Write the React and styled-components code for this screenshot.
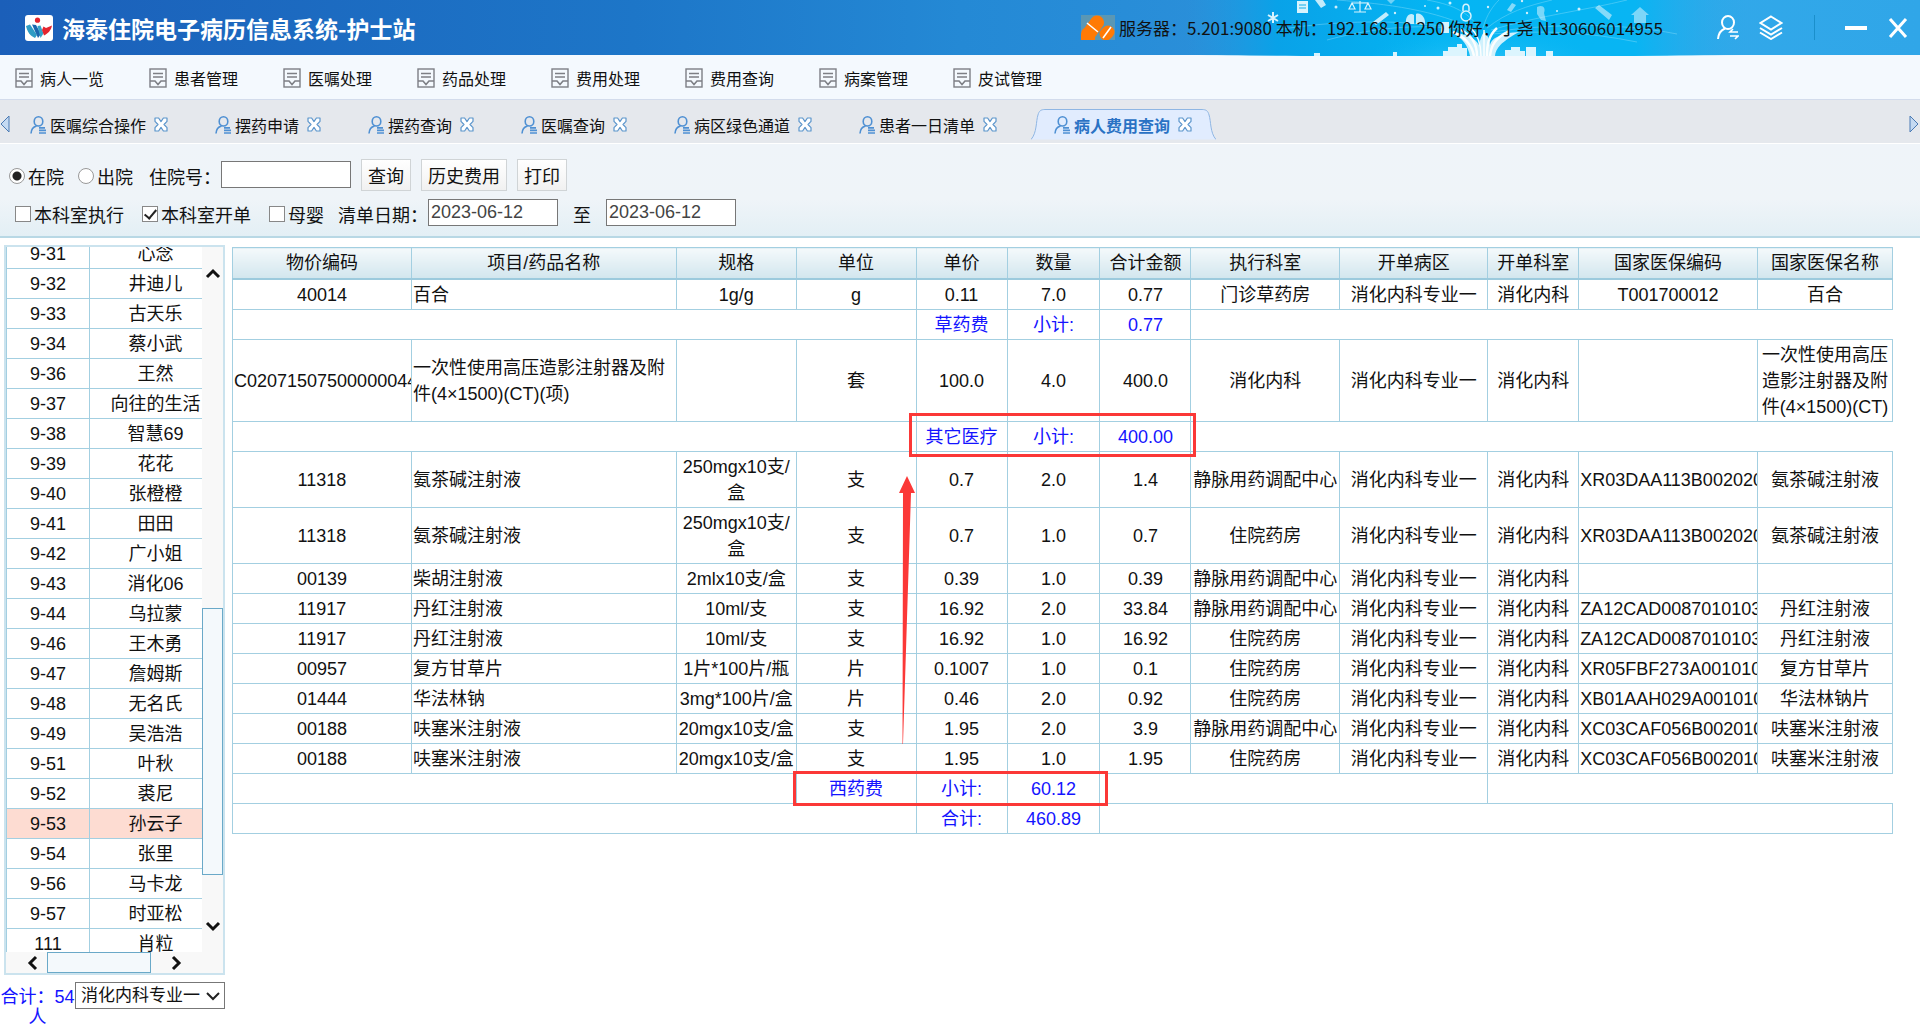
import React, { useLayoutEffect, useRef, useState } from 'react';
import styled, { createGlobalStyle, css } from 'styled-components';

const menus = [
	'病人一览',
	'患者管理',
	'医嘱处理',
	'药品处理',
	'费用处理',
	'费用查询',
	'病案管理',
	'皮试管理',
];

const tabs = [
	'医嘱综合操作',
	'摆药申请',
	'摆药查询',
	'医嘱查询',
	'病区绿色通道',
	'患者一日清单',
	'病人费用查询',
];

const patients = [
	['9-31', '心念'],
	['9-32', '井迪儿'],
	['9-33', '古天乐'],
	['9-34', '蔡小武'],
	['9-36', '王然'],
	['9-37', '向往的生活'],
	['9-38', '智慧69'],
	['9-39', '花花'],
	['9-40', '张橙橙'],
	['9-41', '田田'],
	['9-42', '广小姐'],
	['9-43', '消化06'],
	['9-44', '乌拉蒙'],
	['9-46', '王木勇'],
	['9-47', '詹姆斯'],
	['9-48', '无名氏'],
	['9-49', '吴浩浩'],
	['9-51', '叶秋'],
	['9-52', '裘尼'],
	['9-53', '孙云子'],
	['9-54', '张里'],
	['9-56', '马卡龙'],
	['9-57', '时亚松'],
	['111', '肖粒'],
];

const columns = [
	['物价编码', 179],
	['项目/药品名称', 265],
	['规格', 120],
	['单位', 120],
	['单价', 91],
	['数量', 93],
	['合计金额', 91],
	['执行科室', 149],
	['开单病区', 148],
	['开单科室', 91],
	['国家医保编码', 179],
	['国家医保名称', 135],
];
const totalWidth = columns.reduce((sum, c) => sum + c[1], 0);

const ward = '消化内科专业一';
const dept = '消化内科';
const pivas = '静脉用药调配中心';
const pharmacy = '住院药房';

const rows = [
	['40014', '百合', '1g/g', 'g', '0.11', '7.0', '0.77', '门诊草药房', ward, dept, 'T001700012', '百合'],
	{ lead: 4, cells: ['草药费', '小计:', '0.77'], tail: [5], open: true },
	['C02071507500000044', '一次性使用高压造影注射器及附件(4×1500)(CT)(项)', '', '套', '100.0', '4.0', '400.0', dept, ward, dept, '', '一次性使用高压造影注射器及附件(4×1500)(CT)'],
	{ lead: 4, cells: ['其它医疗', '小计:', '400.00'], tail: [5], open: true },
	['11318', '氨茶碱注射液', '250mgx10支/盒', '支', '0.7', '2.0', '1.4', pivas, ward, dept, 'XR03DAA113B002020', '氨茶碱注射液'],
	['11318', '氨茶碱注射液', '250mgx10支/盒', '支', '0.7', '1.0', '0.7', pharmacy, ward, dept, 'XR03DAA113B002020', '氨茶碱注射液'],
	['00139', '柴胡注射液', '2mlx10支/盒', '支', '0.39', '1.0', '0.39', pivas, ward, dept, '', ''],
	['11917', '丹红注射液', '10ml/支', '支', '16.92', '2.0', '33.84', pivas, ward, dept, 'ZA12CAD0087010103', '丹红注射液'],
	['11917', '丹红注射液', '10ml/支', '支', '16.92', '1.0', '16.92', pharmacy, ward, dept, 'ZA12CAD0087010103', '丹红注射液'],
	['00957', '复方甘草片', '1片*100片/瓶', '片', '0.1007', '1.0', '0.1', pharmacy, ward, dept, 'XR05FBF273A001010', '复方甘草片'],
	['01444', '华法林钠', '3mg*100片/盒', '片', '0.46', '2.0', '0.92', pharmacy, ward, dept, 'XB01AAH029A001010', '华法林钠片'],
	['00188', '呋塞米注射液', '20mgx10支/盒', '支', '1.95', '2.0', '3.9', pivas, ward, dept, 'XC03CAF056B002010', '呋塞米注射液'],
	['00188', '呋塞米注射液', '20mgx10支/盒', '支', '1.95', '1.0', '1.95', pharmacy, ward, dept, 'XC03CAF056B002010', '呋塞米注射液'],
	{ lead: 3, cells: ['西药费', '小计:', '60.12'], tail: [3, 3], open: true },
	{ lead: 4, cells: ['合计:', '460.89'], tail: [6] },
];

const MenuIcon = () => (
	<svg width='18' height='20' viewBox='0 0 18 20' fill='none' stroke='#7d7f85'>
		<rect x='1' y='1' width='16' height='18' strokeWidth='1.4' />
		<path d='M4 5.5h10M4 9h10' strokeWidth='1.4' />
		<path d='M1 13h5l3 3.5 3-3.5h5' strokeWidth='1.6' />
	</svg>
);

const TabUserIcon = () => (
	<svg width='16' height='18' viewBox='0 0 16 18' fill='none' stroke='#4f90d3'>
		<ellipse cx='8.5' cy='5.4' rx='4.3' ry='4.6' strokeWidth='1.6' />
		<path d='M6.5 10C3 11 1.2 14 1 17.5' strokeWidth='1.6' />
		<path d='M9 11.8h6M9 14.4h7M9 17h7' strokeWidth='1.7' />
	</svg>
);

const TabCloseIcon = () => (
	<svg width='14' height='15' viewBox='0 0 14 15'>
		<path
			d='M1 1h3.6L7 4.6 9.4 1H13v3.4L10 7.5l3 3.1V14H9.4L7 10.4 4.6 14H1v-3.4l3-3.1-3-3.1z'
			fill='#fff'
			stroke='#5b95cc'
			strokeWidth='1.2'
			strokeLinejoin='round'
		/>
	</svg>
);

const Logo = () => (
	<svg width='28' height='26' viewBox='0 0 28 26'>
		<rect width='28' height='26' rx='3' fill='#fff' />
		<circle cx='12.5' cy='5.2' r='2.6' fill='#e5252f' />
		<path d='M1 11l4-1.500 7 10.500-2 3C5 21 2 16 1 11z' fill='#2f9cc4' />
		<path d='M7 9.500l4 .5 5 9-3 4z' fill='#1b67ae' />
		<path d='M12.500 11l3-.5 3 8-3 4.500z' fill='#35a3c8' />
		<path d='M17 15l1.500-3.500 2.500 1.500L27 10.500c-1 5-4 8-8 10z' fill='#e5252f' />
	</svg>
);

const PillIcon = () => (
	<svg width='34' height='25' viewBox='0 0 34 25'>
		<rect width='34' height='25' fill='#5a97b4' />
		<path
			d='M7 20L16 7.500M7 25V19'
			stroke='#ff7a05'
			strokeWidth='14'
			strokeLinecap='round'
		/>
		<path d='M25 19l2-2' stroke='#ff7a05' strokeWidth='13' strokeLinecap='round' />
		<path d='M6 8l11 9M22 23l8-11' stroke='#fff' strokeWidth='1.600' />
	</svg>
);

const HeaderArt = () => (
	<svg width='560' height='56' viewBox='0 0 560 56'>
		<defs>
			<linearGradient id='sky'>
				<stop offset='0' stopColor='#1f9ce2' stopOpacity='0' />
				<stop offset='0.16' stopColor='#09a2e8' />
				<stop offset='0.45' stopColor='#04b5f3' />
				<stop offset='0.8' stopColor='#08b5f3' />
				<stop offset='1' stopColor='#2ba8e8' stopOpacity='0' />
			</linearGradient>
			<radialGradient id='glow' cx='0.5' cy='1' r='0.75'>
				<stop offset='0' stopColor='#fff' stopOpacity='0.95' />
				<stop offset='0.4' stopColor='#8de3ff' stopOpacity='0.55' />
				<stop offset='1' stopColor='#12b7f3' stopOpacity='0' />
			</radialGradient>
		</defs>
		<path d='M0 0H560V55C440 57 160 57 0 55z' fill='url(#sky)' />
		<ellipse cx='296' cy='56' rx='110' ry='62' fill='url(#glow)' />
		<g stroke='#8fe0fb' strokeWidth='0.700' fill='none' opacity='0.600'>
			<path d='M286 32C240 20 160 18 90 30M288 30C250 10 200 4 150 0M292 28C280 10 262 4 240 0' />
			<path d='M296 28C300 14 306 6 312 0M300 28C320 12 340 6 365 0M304 30C350 16 400 10 440 0' />
			<path d='M306 32C360 24 430 22 490 34M290 32C250 24 200 24 140 40M304 34C360 30 400 32 450 42' />
		</g>
		<path d='M264 32C276 38 281 46 283 56H308C309 48 314 42 332 32 312 34 305 38 303 45 302 38 300 34 297 32 294 36 293 40 292 45 288 38 280 34 264 32z' fill='#fff' opacity='0.800' />
		<g stroke='#fff' fill='none' opacity='0.950'>
			<path d='M266 32C280 38 285 46 287 56M274 30C286 36 290 46 290 56' strokeWidth='2.500' />
			<path d='M284 28C292 36 294 46 294 56M297 30V56' strokeWidth='1.500' />
			<path d='M310 28C301 36 300 46 300 56M322 31C308 38 304 46 303 56' strokeWidth='2.500' />
		</g>
		<g fill='#fff' opacity='0.850'>
			<path d='M256 56v-5h5v-4h9v-3h5v4h5v8zM318 56v-6h6v-3h9v4h5v5zM339 56v-9h10v9zM359 56v-5h7v5zM206 56v-4h4v4zM127 56v-3h6v3z' />
		</g>
		<g fill='#d8f3fd'>
			<path d='M110 1h11v12h-11z' />
			<path d='M128 0h8l3 5-5 3zM186 22l13-10 3 3-13 10z' opacity='0.900' />
			<path d='M219 24c-1-8 4-12 8-9v9zM229 24v-10c5-2 10 4 9 11z' opacity='0.900' />
			<path d='M255 22h7v11h-8z' />
			<path d='M320 10l5-7 4 2-5 7zM408 8l4-3 13 10-3 5z' opacity='0.600' />
			<path d='M444 15l9-8 9 8h-3v8h-12v-8zM350 7c6-3 9 1 7 6l2 8-5-1-4-6z' opacity='0.550' />
			<path d='M200 0h8l-4 4z' opacity='0.500' />
		</g>
		<path d='M112 5h7M112 8h7' stroke='#15aeea' />
		<g stroke='#d8f3fd' fill='none' strokeWidth='1.500'>
			<path d='M86 12v11M81 15l10 6M91 15l-10 6' strokeWidth='2' />
			<path d='M173 1v11M167 12h12M165 3h16M165 3l-3 6h6zM181 3l-3 6h6z' strokeWidth='1.200' />
			<circle cx='279' cy='16' r='5' />
			<path d='M276 11v-3c0-5 6-5 6 0v3' />
		</g>
		<g fill='#fff' opacity='0.800'>
			<circle cx='149' cy='7' r='1.500' />
			<circle cx='208' cy='13' r='1.200' />
			<circle cx='238' cy='6' r='1' />
			<circle cx='251' cy='8' r='1.500' />
			<circle cx='263' cy='3' r='1.500' />
			<circle cx='301' cy='7' r='1.200' />
			<circle cx='335' cy='1' r='1.200' />
			<circle cx='340' cy='13' r='1.200' />
			<circle cx='370' cy='11' r='1' />
			<circle cx='392' cy='9' r='1.500' />
		</g>
	</svg>
);

const SwitchUserIcon = () => (
	<svg width='22' height='25' viewBox='0 0 22 25' fill='none' stroke='#fff' strokeWidth='2'>
		<ellipse cx='11' cy='7.500' rx='6' ry='6.500' />
		<path d='M8 13.500C4 15 1.500 19 1 24' />
		<path d='M21 17h-8l3-3M13 21h8l-3 3' strokeWidth='1.600' />
	</svg>
);

const LayersIcon = () => (
	<svg width='24' height='25' viewBox='0 0 24 25' fill='none' stroke='#fff' strokeWidth='2'>
		<path d='M12 1.500L22.500 8 12 14.500 1.500 8z' />
		<path d='M1 13l11 6.500L23 13M1 17.500L12 24l11-6.500' />
	</svg>
);

const Chevron = ({ turn = 0 }) => (
	<svg width='16' height='16' viewBox='0 0 16 16' fill='none'>
		<path
			d='M2 11l6-6 6 6'
			stroke='#111'
			strokeWidth='3'
			transform={`rotate(${turn} 8 8)`}
		/>
	</svg>
);

const TabArrow = ({ flip }) => (
	<svg width='10' height='18' viewBox='0 0 10 18'>
		<path
			d={flip ? 'M1 1l8 8-8 8z' : 'M9 1L1 9l8 8z'}
			fill='#c5daf2'
			stroke='#4a7ab4'
		/>
	</svg>
);

function SummaryRow({ row }) {
	return (
		<tr>
			<Td colSpan={row.lead} />
			{row.cells.map((text) => (
				<Td key={text} $blue>
					{text}
				</Td>
			))}
			{row.tail.map((span, i) => (
				<Td
					key={i}
					colSpan={span}
					$open={row.open && i === row.tail.length - 1}
				/>
			))}
		</tr>
	);
}

function PatientList() {
	const view = useRef(null);
	const [selected, setSelected] = useState('9-53');

	useLayoutEffect(() => {
		view.current.scrollTop = 9;
	}, []);

	return (
		<ListPanel>
			<ListView ref={view}>
				<PatientTable>
					<tbody>
						{patients.map(([bed, name]) => (
							<PatientRow
								key={bed}
								$active={bed === selected}
								onClick={() => setSelected(bed)}>
								<BedCell>{bed}</BedCell>
								<td>{name}</td>
							</PatientRow>
						))}
					</tbody>
				</PatientTable>
			</ListView>
			<VerticalBar>
				<ScrollButton aria-label='向上'>
					<Chevron />
				</ScrollButton>
				<Space $grow={325} />
				<Thumb $grow={265} />
				<Space $grow={40} />
				<ScrollButton aria-label='向下'>
					<Chevron turn={180} />
				</ScrollButton>
			</VerticalBar>
			<HorizontalBar>
				<ScrollButton aria-label='向左'>
					<Chevron turn={270} />
				</ScrollButton>
				<Space $grow={4} />
				<Thumb $grow={101} />
				<Space $grow={14} />
				<ScrollButton aria-label='向右'>
					<Chevron turn={90} />
				</ScrollButton>
			</HorizontalBar>
		</ListPanel>
	);
}

function FeeTable() {
	return (
		<TableArea>
			<Table>
				<colgroup>
					{columns.map(([name, width]) => (
						<col key={name} style={{ width: `${(width / totalWidth) * 100}%` }} />
					))}
				</colgroup>
				<thead>
					<tr>
						{columns.map(([name]) => (
							<Th key={name}>{name}</Th>
						))}
					</tr>
				</thead>
				<tbody>
					{rows.map((row, i) =>
						Array.isArray(row) ? (
							<tr key={i}>
								{row.map((text, c) => (
									<Td key={c} $left={c === 1} $clip={c === 0 || c === 10}>
										{text}
									</Td>
								))}
							</tr>
						) : (
							<SummaryRow key={i} row={row} />
						)
					)}
				</tbody>
			</Table>
			<MarkBox $x={677} $y={168} $w={287} $h={44} />
			<MarkBox $x={561} $y={526} $w={315} $h={35} />
			<MarkArrow width='16' height='268' viewBox='0 0 16 268'>
				<path d='M8 0l8 17h-4L4 268H3.500L4 17H0z' fill='#fb3837' />
			</MarkArrow>
		</TableArea>
	);
}

export default function App() {
	const [activeTab, setActiveTab] = useState('病人费用查询');

	return (
		<Page>
			<GlobalStyle />
			<Header>
				<Art>
					<HeaderArt />
				</Art>
				<Logo />
				<Title>海泰住院电子病历信息系统-护士站</Title>
				<PillIcon />
				<ServerInfo>
					服务器：5.201:9080 本机：192.168.10.250 你好：丁尧 N130606014955
				</ServerInfo>
				<HeaderTools>
					<IconButton aria-label='切换用户'>
						<SwitchUserIcon />
					</IconButton>
					<IconButton aria-label='模块'>
						<LayersIcon />
					</IconButton>
				</HeaderTools>
				<WindowTools>
					<IconButton aria-label='最小化'>
						<svg width='22' height='20' viewBox='0 0 22 20'>
							<path d='M0 10h22' stroke='#fff' strokeWidth='4' />
						</svg>
					</IconButton>
					<IconButton aria-label='关闭'>
						<svg width='20' height='20' viewBox='0 0 20 20'>
							<path d='M2 1l16 18M18 1L2 19' stroke='#fff' strokeWidth='3' />
						</svg>
					</IconButton>
				</WindowTools>
			</Header>

			<MenuBar>
				{menus.map((name) => (
					<MenuItem key={name}>
						<MenuIcon />
						{name}
					</MenuItem>
				))}
			</MenuBar>

			<TabBar>
				<IconButton aria-label='上一页'>
					<TabArrow />
				</IconButton>
				<Tabs>
					{tabs.map((name) => (
						<Tab
							key={name}
							$active={name === activeTab}
							onClick={() => setActiveTab(name)}>
							{name === activeTab && (
								<TabShape viewBox='0 0 186 31' preserveAspectRatio='none'>
									<path
										d='M0 30.500C6 24 5 12 7 6 8 2 10 .5 14 .5H172C176 .5 178 2 179 6 181 12 180 24 186 30.500'
										fill='#e1ecfe'
										stroke='#8fb6e3'
									/>
								</TabShape>
							)}
							<TabUserIcon />
							<TabName>{name}</TabName>
							<TabCloseIcon />
						</Tab>
					))}
				</Tabs>
				<IconButton aria-label='下一页'>
					<TabArrow flip />
				</IconButton>
			</TabBar>

			<Filters>
				<FilterRow>
					<Check $gap={14}>
						<Radio type='radio' name='state' defaultChecked />
						在院
					</Check>
					<Check $gap={16}>
						<Radio type='radio' name='state' />
						出院
					</Check>
					<label htmlFor='admission'>住院号：</label>
					<TextInput id='admission' type='text' />
					<Actions>
						<Button>查询</Button>
						<Button>历史费用</Button>
						<Button>打印</Button>
					</Actions>
				</FilterRow>
				<FilterRow $indent>
					<Check $gap={18}>
						<Tick type='checkbox' />
						本科室执行
					</Check>
					<Check $gap={18}>
						<Tick type='checkbox' defaultChecked />
						本科室开单
					</Check>
					<Check $gap={14}>
						<Tick type='checkbox' />
						母婴
					</Check>
					<label htmlFor='from'>清单日期：</label>
					<TextInput id='from' type='text' defaultValue='2023-06-12' />
					<To htmlFor='to'>至</To>
					<TextInput id='to' type='text' defaultValue='2023-06-12' />
				</FilterRow>
			</Filters>

			<Body>
				<Sidebar>
					<PatientList />
					<SidebarFooter>
						<Count htmlFor='ward'>合计：54人</Count>
						<SelectBox>
							<select id='ward' defaultValue={ward}>
								<option>{ward}</option>
							</select>
							<svg width='14' height='10' viewBox='0 0 14 10' fill='none'>
								<path d='M1 2l6 6 6-6' stroke='#222' strokeWidth='2' />
							</svg>
						</SelectBox>
					</SidebarFooter>
				</Sidebar>
				<FeeTable />
			</Body>
		</Page>
	);
}

const GlobalStyle = createGlobalStyle`
	* {
		box-sizing: border-box;
	}

	body {
		margin: 0;
		background: #fff;
	}

	body,
	button,
	input,
	select {
		font-family: 'Liberation Sans', 'Noto Sans CJK SC', sans-serif;
		font-size: 18px;
		color: #111;
	}

	svg {
		display: block;
		flex: none;
	}
`;

const Page = styled.div`
	display: flex;
	flex-direction: column;
	height: 100vh;
	overflow: hidden;
`;

const Header = styled.header`
	position: relative;
	display: flex;
	align-items: center;
	flex: none;
	height: 55px;
	padding: 0 12px 0 25px;
	background: linear-gradient(
		90deg,
		#1b5fb9 0%,
		#1d76c8 33%,
		#2489d5 50%,
		#2b90da 65%,
		#32a9ea 85%,
		#30a6e8 100%
	);

	> * {
		position: relative;
	}
`;

const Art = styled.div`
	&& {
		position: absolute;
		top: 0;
		right: 173px;
	}
`;

const Title = styled.h1`
	flex: 1;
	margin: 0 0 0 9px;
	font-family: 'Noto Sans CJK SC', sans-serif;
	font-size: 23px;
	line-height: 30px;
	font-weight: 700;
	color: #fff;
`;

const ServerInfo = styled.span`
	width: 540px;
	margin: 0 58px 0 4px;
	font-family: 'Noto Sans CJK SC', sans-serif;
	font-size: 17px;
	white-space: nowrap;
`;

const HeaderTools = styled.div`
	display: flex;
	gap: 20px;
	padding-right: 31px;
	border-right: 1px solid #1a8fcb;
`;

const WindowTools = styled.div`
	display: flex;
	gap: 21px;
	margin-left: 30px;
`;

const IconButton = styled.button`
	padding: 0;
	border: 0;
	background: none;
	cursor: pointer;
`;

const MenuBar = styled.nav`
	display: flex;
	flex: none;
	gap: 45px;
	height: 45px;
	padding: 2px 15px 0;
	background: #f4f9fe;
	border-bottom: 1px solid #d3dcec;
`;

const MenuItem = styled.button`
	display: flex;
	align-items: center;
	gap: 7px;
	padding: 0;
	border: 0;
	background: none;
	font-size: 16px;
`;

const TabBar = styled.div`
	display: flex;
	flex: none;
	align-items: center;
	height: 44px;
	padding: 4px 1px 0 0;
	background: #e5e8ed;
	border-bottom: 1px solid #fff;
`;

const Tabs = styled.div`
	display: flex;
	flex: 1;
	align-self: flex-end;
	margin-left: -3px;
`;

const Tab = styled.button`
	position: relative;
	display: flex;
	align-items: center;
	height: 31px;
	margin: 0 0 3px;
	padding: 0 24px 0 23px;
	border: 0;
	background: none;
	font-size: 16px;

	> * {
		position: relative;
	}

	${(props) =>
		props.$active &&
		css`
			margin-left: 10px;
			font-weight: 700;
			color: #2a72c4;
		`}
`;

const TabShape = styled.svg`
	&& {
		position: absolute;
		inset: 0;
		width: 100%;
		height: 100%;
	}
`;

const TabName = styled.span`
	margin: 0 8px 0 4px;
`;

const Filters = styled.form`
	flex: none;
	padding: 14px 9px 7px;
	background: linear-gradient(#eff4f9, #eff4f8 60%, #e3eff5);
	border-bottom: 2px solid #b8d8e5;
`;

const FilterRow = styled.div`
	display: flex;
	align-items: center;
	height: 33px;
	margin-bottom: 5px;
	padding-left: ${(props) => (props.$indent ? '6px' : '0')};
	white-space: nowrap;

	&:last-child {
		margin-bottom: 0;
	}

	label {
		padding-top: 3px;
	}
`;

const Check = styled.label`
	display: flex;
	align-items: center;
	gap: 3px;
	margin-right: ${(props) => props.$gap}px;
`;

const Radio = styled.input`
	appearance: none;
	width: 16px;
	height: 16px;
	margin: 0;
	border: 1px solid #999;
	border-radius: 50%;
	background: #fff;

	&:checked {
		background: radial-gradient(circle, #222 4px, #fff 5px);
	}
`;

const Tick = styled.input`
	appearance: none;
	display: grid;
	place-items: center;
	width: 16px;
	height: 16px;
	margin: 0;
	border: 1px solid #888;
	background: #fff;

	&:checked::after {
		content: '';
		width: 5px;
		height: 10px;
		margin-bottom: 3px;
		border: solid #222;
		border-width: 0 2px 2px 0;
		transform: rotate(40deg);
	}
`;

const TextInput = styled.input`
	width: 130px;
	height: 27px;
	padding: 0 2px;
	border: 1px solid #777;
	outline: 0;
	background: #fff;
	color: #444;
`;

const Actions = styled.div`
	display: flex;
	gap: 10px;
	margin-left: 10px;
`;

const Button = styled.button.attrs({ type: 'button' })`
	height: 32px;
	padding: 0 6px;
	border: 1px solid #d0d4d6;
	background: linear-gradient(#fff, #f1f1f1);
`;

const To = styled.label`
	margin: 0 15px;
`;

const Body = styled.main`
	display: flex;
	flex: 1;
	min-height: 0;
	padding: 7px 27px 0 4px;
	gap: 7px;
`;

const Sidebar = styled.aside`
	display: flex;
	flex: none;
	flex-direction: column;
	width: 221px;
`;

const ListPanel = styled.div`
	display: grid;
	flex: 1;
	min-height: 0;
	grid-template: minmax(0, 1fr) 21px / minmax(0, 1fr) 21px;
	border: 2px solid #cbe3ee;
	background: #f8f8f8;
`;

const ListView = styled.div`
	overflow: hidden;
	background: #fff;
`;

const PatientTable = styled.table`
	width: 216px;
	table-layout: fixed;
	border-collapse: collapse;
	text-align: center;

	td {
		height: 30px;
		padding: 2px 0 1px;
		border: 1px solid #a3cfe1;
		line-height: 26px;
	}
`;

const PatientRow = styled.tr`
	background: ${(props) => (props.$active ? '#fddcd2' : '#fff')};
	cursor: pointer;
`;

const BedCell = styled.td`
	width: 83px;
`;

const VerticalBar = styled.div`
	display: flex;
	flex-direction: column;
	grid-row: 1 / 3;
	grid-column: 2;
	padding: 16px 0 37px;
`;

const HorizontalBar = styled.div`
	display: flex;
	grid-row: 2;
	grid-column: 1;
	padding: 0 16px;
`;

const ScrollButton = styled.button`
	display: grid;
	flex: none;
	place-items: center;
	width: 21px;
	height: 21px;
	padding: 0;
	border: 0;
	background: none;
`;

const Space = styled.div`
	flex: ${(props) => props.$grow} 1 0;
`;

const Thumb = styled.div`
	flex: ${(props) => props.$grow} 1 0;
	border: 1px solid #6aa9c8;
	background: #f4f9fc;
`;

const SidebarFooter = styled.div`
	display: flex;
	flex: none;
	align-items: flex-start;
	height: 53px;
	margin-left: -4px;
	padding-top: 7px;
`;

const Count = styled.label`
	flex: 1;
	padding-top: 5px;
	line-height: 20px;
	text-align: center;
	color: #1414ff;
`;

const SelectBox = styled.div`
	display: flex;
	align-items: center;
	width: 150px;
	height: 27px;
	border: 1px solid #777;
	background: #fff;

	select {
		appearance: none;
		flex: 1;
		min-width: 0;
		padding: 0 0 0 5px;
		border: 0;
		outline: 0;
		background: none;
		font-size: 17px;
	}

	svg {
		margin-right: 4px;
	}
`;

const TableArea = styled.section`
	position: relative;
	flex: 1;
	min-width: 0;
	padding-top: 2px;
`;

const cell = css`
	overflow: hidden;
	padding: 2px 1px 1px;
	border: 1px solid #a3cfe1;
	line-height: 26px;
`;

const Table = styled.table`
	width: 100%;
	table-layout: fixed;
	border-collapse: collapse;
	text-align: center;
`;

const Th = styled.th`
	${cell}
	height: 31px;
	border-bottom: 2px solid #9ccadd;
	background: linear-gradient(#f4f9fb, #d2e6ee);
	font-weight: 400;
	white-space: nowrap;
`;

const Td = styled.td`
	${cell}
	height: 30px;
	text-align: ${(props) => (props.$left ? 'left' : 'center')};
	white-space: ${(props) => (props.$clip ? 'nowrap' : 'normal')};
	color: ${(props) => (props.$blue ? '#1414ff' : 'inherit')};
	${(props) => props.$open && 'border-right: 0;'}
`;

const MarkBox = styled.div`
	position: absolute;
	left: ${(props) => props.$x}px;
	top: ${(props) => props.$y}px;
	width: ${(props) => props.$w}px;
	height: ${(props) => props.$h}px;
	border: 3px solid #fb3837;
	pointer-events: none;
`;

const MarkArrow = styled.svg`
	position: absolute;
	left: 667px;
	top: 231px;
	pointer-events: none;
`;
